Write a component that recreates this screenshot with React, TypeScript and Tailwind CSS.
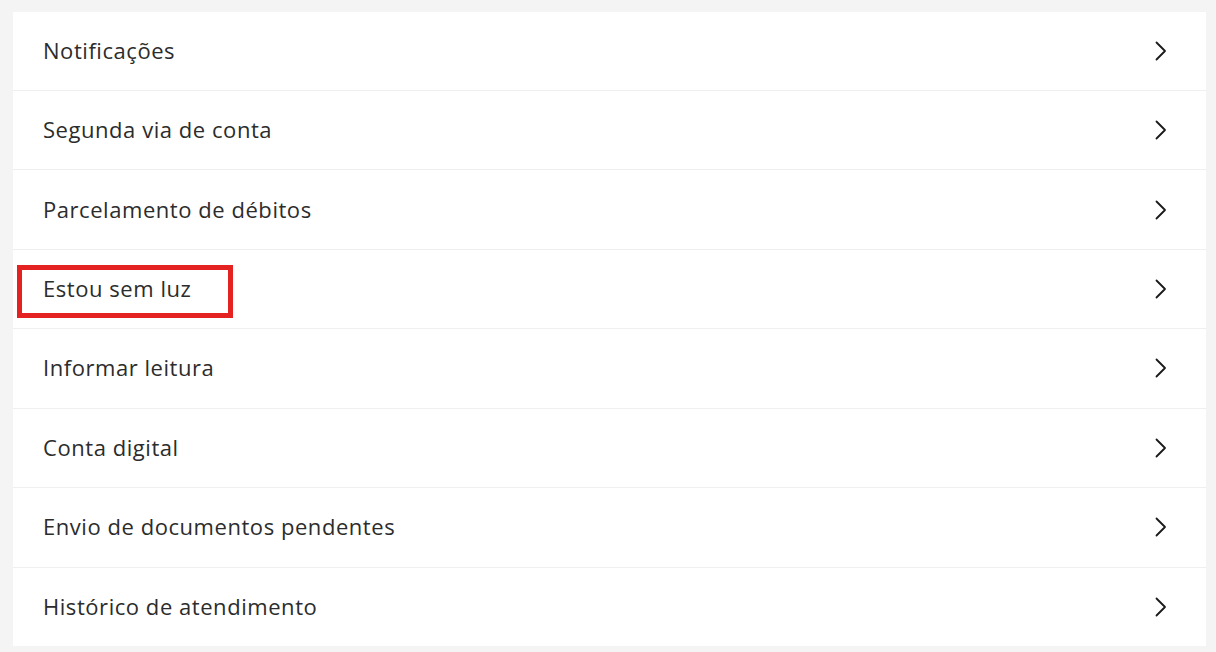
import React from 'react';

const items = [
  'Notificações',
  'Segunda via de conta',
  'Parcelamento de débitos',
  'Estou sem luz',
  'Informar leitura',
  'Conta digital',
  'Envio de documentos pendentes',
  'Histórico de atendimento',
];

const Chevron = () => (
  <svg width="12" height="20" viewBox="0 0 12 20" fill="none" className="shrink-0">
    <path d="M1.5 1.5 L10 10 L1.5 18.5" stroke="#1a1a1a" strokeWidth="1.8" strokeLinecap="round" strokeLinejoin="round" />
  </svg>
);

const App: React.FC = () => {
  return (
    <div className="min-h-screen w-full bg-[#f4f4f4] pt-[12px] pl-[13px] pr-[10px]">
      <ul className="bg-white">
        {items.map((label, i) => (
          <li
            key={label}
            className={
              i === 0
                ? 'relative flex items-center justify-between h-[78px] pl-[30px] pr-[39px]'
                : 'relative flex items-center justify-between h-[79.43px] pl-[30px] pr-[39px] border-t border-[#efefef]'
            }
          >
            <span
              className="text-[22px] tracking-[0.55px] leading-none -mt-[2px] text-[#2c2c2c]"
              style={{ fontFamily: '"Open Sans", sans-serif' }}
            >
              {label}
            </span>
            <Chevron />
            {label === 'Estou sem luz' && (
              <div className="absolute left-[4px] top-[15px] w-[216px] h-[53px] border-[5px] border-[#e52222] pointer-events-none" />
            )}
          </li>
        ))}
      </ul>
    </div>
  );
};

export default App;
